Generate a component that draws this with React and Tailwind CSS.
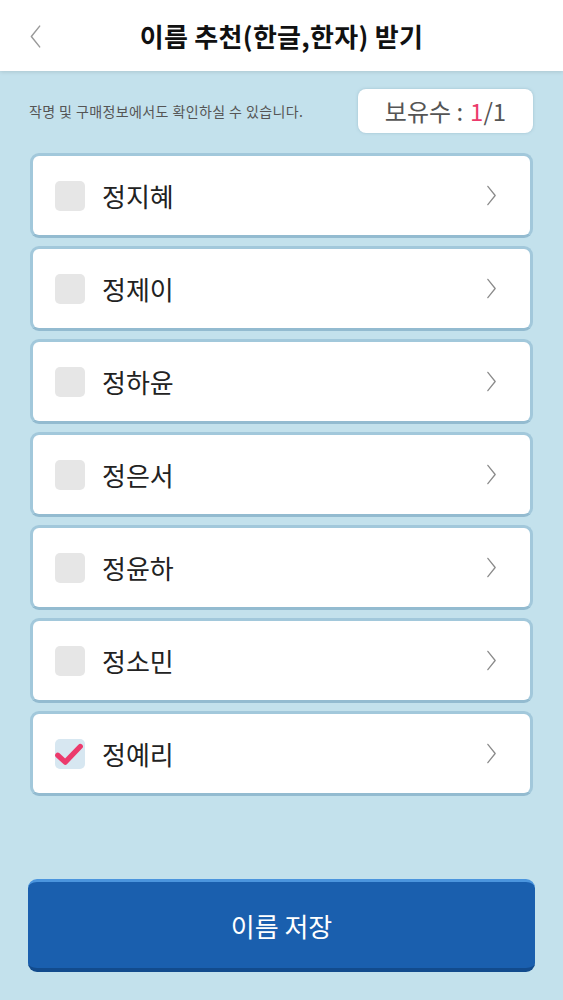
import React, { useState } from "react";

const NAMES = ["정지혜", "정제이", "정하윤", "정은서", "정윤하", "정소민", "정예리"];

const font = { fontFamily: '"Noto Sans CJK KR", "Noto Sans", sans-serif' };

const Chevron = ({ dir = "right", className = "" }) => (
  <svg viewBox="0 0 12 24" className={className} fill="none" stroke="currentColor" strokeWidth="1.4" strokeLinecap="round" strokeLinejoin="round">
    {dir === "right" ? <path d="M2 2 L10 12 L2 22" /> : <path d="M10 2 L2 12 L10 22" />}
  </svg>
);

const NameRow = ({ name, checked, onToggle }) => (
  <button
    onClick={onToggle}
    className="flex items-center h-[85px] w-full rounded-[9px] border-[3px] border-[#a2c8db] border-b-[#93bbd0] bg-white pl-[22px] pr-[33px] text-left"
  >
    <span
      className={`flex items-center justify-center w-[30px] h-[30px] rounded-[5px] ${
        checked ? "bg-[#d7e7f1]" : "bg-[#e6e6e6]"
      }`}
    >
      {checked && (
        <svg viewBox="0 0 24 24" className="w-[30px] h-[30px] -ml-[2px]" fill="none" stroke="#ec3a6c" strokeWidth="4.2" strokeLinecap="round" strokeLinejoin="round">
          <path d="M3 13 L9 18.5 L21 6" />
        </svg>
      )}
    </span>
    <span className="ml-[17px] flex-1 text-[26px] leading-none text-[#222]">{name}</span>
    <Chevron className="w-[11px] h-[23px] text-[#8a8a8a]" />
  </button>
);

export default function App() {
  const [selected, setSelected] = useState(6);

  return (
    <div className="w-[563px] h-[1000px] bg-[#c3e1ec] flex flex-col" style={font}>
      <header className="relative h-[71px] bg-white flex items-center justify-center shadow-[0_1px_4px_rgba(0,0,0,0.12)]">
        <Chevron dir="left" className="absolute left-[29px] top-[24px] w-[13px] h-[25px] text-[#9a9a9a]" />
        <h1 className="text-[26px] font-bold text-[#111] tracking-[0.3px]">이름 추천(한글,한자) 받기</h1>
      </header>

      <div className="flex items-center justify-between pl-[29px] pr-[30px] pt-[18px]">
        <p className="text-[14px] tracking-[0.4px] text-[#555]">작명 및 구매정보에서도 확인하실 수 있습니다.</p>
        <div className="flex items-center justify-center w-[175px] h-[44px] bg-white rounded-[8px] shadow-[0_0_3px_rgba(120,160,180,0.5)] text-[24px] text-[#555]">
          보유수 : <span className="text-[#ec3a6c] ml-[7px]">1</span>/1
        </div>
      </div>

      <div className="flex flex-col gap-[8px] px-[30px] mt-[20px]">
        {NAMES.map((n, i) => (
          <NameRow key={n} name={n} checked={selected === i} onToggle={() => setSelected(i)} />
        ))}
      </div>

      <div className="px-[28px] mt-[83px]">
        <button className="w-full h-[93px] rounded-[9px] bg-[#1a5fae] border-t-[3px] border-t-[#4b95de] border-b-[4px] border-b-[#124b8d] text-white text-[26px]">
          이름 저장
        </button>
      </div>
    </div>
  );
}
